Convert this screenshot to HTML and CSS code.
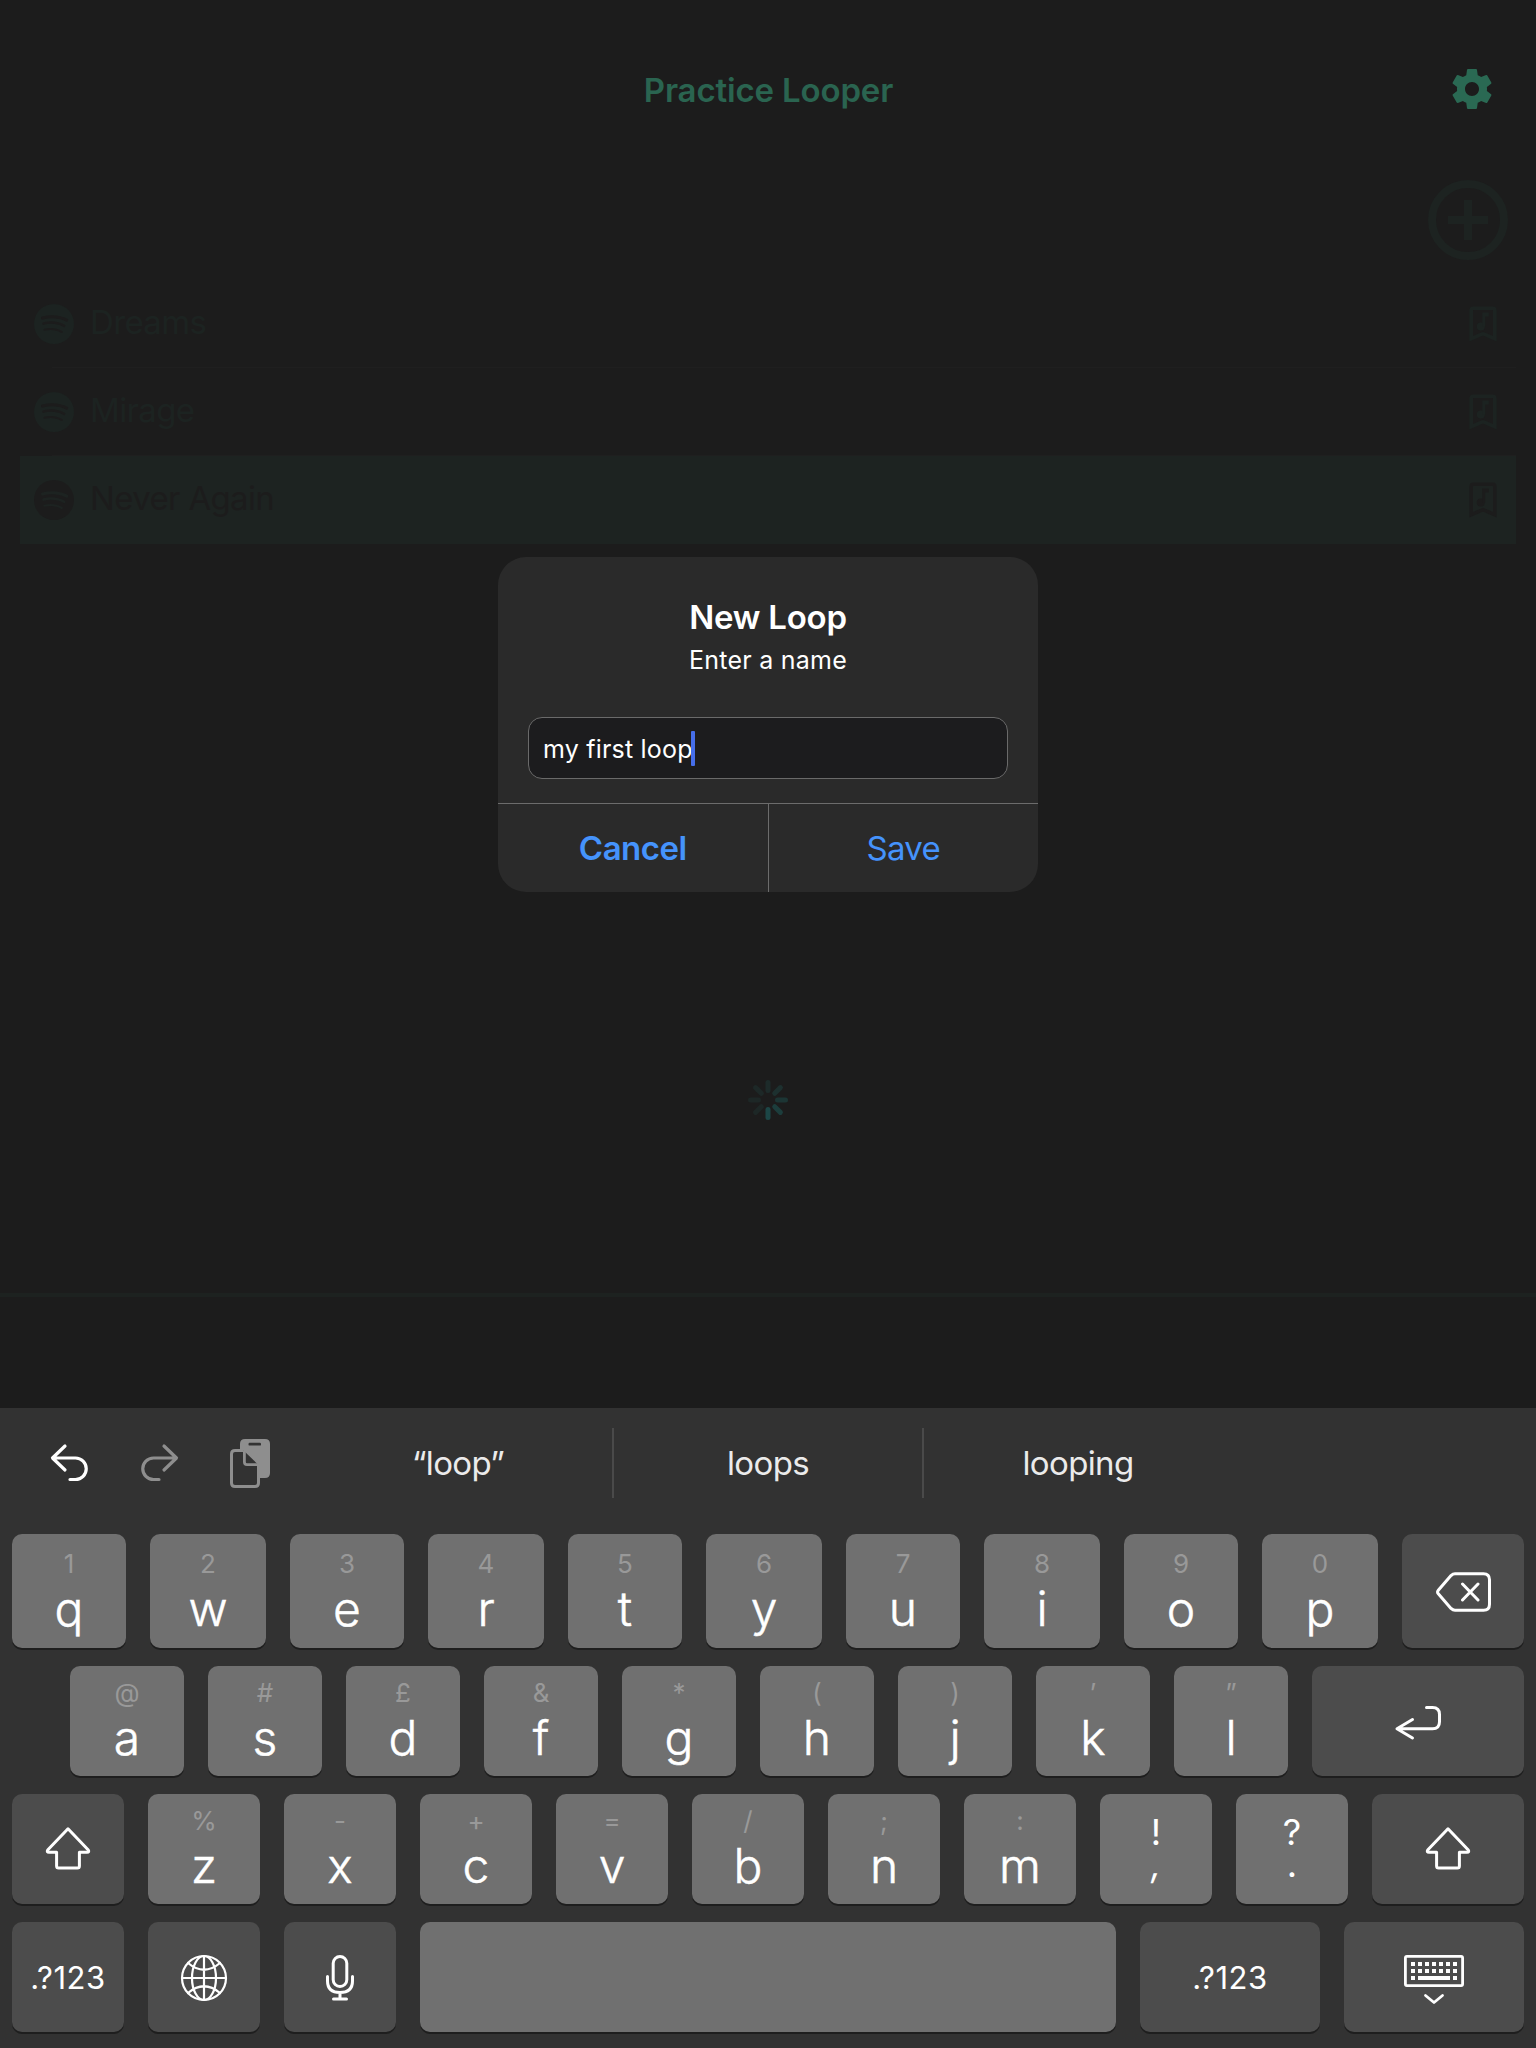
FILE: index.html
```html
<!DOCTYPE html>
<html lang="en">
<head>
<meta charset="utf-8">
<title>Practice Looper</title>
<link rel="stylesheet" href="styles.css">
</head>
<body>
<svg class="defs" width="0" height="0" aria-hidden="true">
  <symbol id="i-spotify" viewBox="0 0 40 40">
    <path fill="currentColor" fill-rule="evenodd" d="M20 0a20 20 0 1 0 0 40a20 20 0 0 0 0-40zM8 12.6c9-2.600 18.500-1.600 25.400 2.200a1.550 1.550 0 0 1-1.600 2.700c-6.300-3.300-15-4.200-22.900-2.100a1.450 1.450 0 0 1-.9-2.800zM9.200 18.300c7.600-2 15.400-1.200 21.600 2.500a1.250 1.250 0 0 1-1.300 2.200c-5.600-3.200-12.700-4-19.600-2.200a1.280 1.280 0 0 1-.7-2.500zM10.200 24.800c6.400-1.500 12.600-1 18 2.300a1 1 0 0 1-1 1.800c-4.900-2.900-10.700-3.400-16.500-2.100a1.020 1.020 0 0 1-.5-2z"/>
  </symbol>
  <symbol id="i-bookmark" viewBox="0 0 28 36">
    <path fill="none" stroke="currentColor" stroke-width="3.600" d="M2.200 32.700V4.200q0-2 2-2h19.600q2 0 2 2v28.500L14 27.700z"/>
    <circle cx="11.800" cy="20.500" r="4" fill="currentColor"/>
    <path fill="currentColor" d="M13.300 6.500h6.500v4h-3.600v10.200h-2.900z"/>
  </symbol>
  <symbol id="i-shift" viewBox="0 0 48 44">
    <path fill="none" stroke="currentColor" stroke-width="3" stroke-linejoin="round" d="M24 2.800L44.300 24q1.300 2.200-1.300 2.200h-7.600V40q0 2-2 2H14.600q-2 0-2-2V26.200H5q-2.600 0-1.300-2.200z"/>
  </symbol>
</svg>

<main class="app">
  <header class="navbar">
    <h1 class="navbar-title">Practice Looper</h1>
    <svg class="navbar-gear" viewBox="0 0 24 24"><path fill="currentColor" d="M19.430 12.980c.04-.32.07-.64.07-.98s-.03-.66-.07-.98l2.110-1.650c.19-.15.24-.42.12-.64l-2-3.460c-.12-.22-.39-.3-.61-.22l-2.490 1c-.52-.4-1.080-.73-1.690-.98l-.38-2.650C14.460 2.180 14.250 2 14 2h-4c-.25 0-.46.18-.49.42l-.38 2.650c-.61.25-1.170.59-1.690.98l-2.490-1c-.23-.09-.49 0-.61.22l-2 3.460c-.13.22-.07.49.12.64l2.110 1.650c-.04.32-.07.65-.07.98s.03.66.07.98l-2.110 1.650c-.19.15-.24.42-.12.64l2 3.460c.12.22.39.3.61.22l2.490-1c.52.4 1.080.73 1.690.98l.38 2.650c.03.24.24.42.49.42h4c.25 0 .46-.18.49-.42l.38-2.650c.61-.25 1.170-.59 1.690-.98l2.490 1c.23.09.49 0 .61-.22l2-3.460c.12-.22.07-.49-.12-.64l-2.110-1.650zM12 15.500c-1.930 0-3.500-1.570-3.500-3.500s1.570-3.500 3.500-3.500 3.500 1.570 3.500 3.500-1.570 3.500-3.500 3.500z"/></svg>
  </header>
  <div class="add-row">
    <svg class="add-icon" viewBox="0 0 80 80"><circle cx="40" cy="40" r="36"/><path d="M40 20v40M20 40h40"/></svg>
  </div>
  <ul class="songs">
    <li class="song">
      <svg class="song-source"><use href="#i-spotify"/></svg>
      <span class="song-name">Dreams</span>
      <svg class="song-mark"><use href="#i-bookmark"/></svg>
    </li>
    <li class="song">
      <svg class="song-source"><use href="#i-spotify"/></svg>
      <span class="song-name">Mirage</span>
      <svg class="song-mark"><use href="#i-bookmark"/></svg>
    </li>
    <li class="song song-selected">
      <svg class="song-source"><use href="#i-spotify"/></svg>
      <span class="song-name">Never Again</span>
      <svg class="song-mark"><use href="#i-bookmark"/></svg>
    </li>
  </ul>
  <div class="loading">
    <svg class="spinner" viewBox="-20 -20 40 40">
      <path d="M0-9.500V-17.500" stroke="#1d2b2a"/>
      <path d="M0-9.500V-17.500" stroke="#1d302f" transform="rotate(45)"/>
      <path d="M0-9.500V-17.500" stroke="#1c3534" transform="rotate(90)"/>
      <path d="M0-9.500V-17.500" stroke="#1c3d3c" transform="rotate(135)"/>
      <path d="M0-9.500V-17.500" stroke="#1c4646" transform="rotate(180)"/>
      <path d="M0-9.500V-17.500" stroke="#1d2726" transform="rotate(225)"/>
      <path d="M0-9.500V-17.500" stroke="#1d2726" transform="rotate(270)"/>
      <path d="M0-9.500V-17.500" stroke="#1d2827" transform="rotate(315)"/>
    </svg>
  </div>
  <div class="player-bar"></div>
</main>

<div class="overlay">
  <section class="dialog" role="dialog">
    <h2 class="dialog-title">New Loop</h2>
    <p class="dialog-message">Enter a name</p>
    <div class="dialog-input"><span class="dialog-value">my first loop</span><span class="caret"></span></div>
    <div class="dialog-actions">
      <span class="action action-cancel">Cancel</span>
      <span class="action action-save">Save</span>
    </div>
  </section>
</div>

<section class="keyboard">
  <div class="toolbar">
    <div class="tools">
      <svg class="tool tool-undo" viewBox="0 0 40 40"><path d="M17 7L4.500 19L17 31M5 19H27.500A10.750 10.750 0 0 1 27.500 40.500H22"/></svg>
      <svg class="tool tool-redo" viewBox="0 0 40 40"><path d="M23 7L35.500 19L23 31M35 19H12.500A10.750 10.750 0 0 0 12.500 40.500H18"/></svg>
      <svg class="tool-paste" viewBox="0 0 40 49">
        <path fill="#8e8e8e" d="M15 0h20q5 0 5 5v29q0 5-5 5H15q-5 0-5-5V5q0-5 5-5z"/>
        <rect x="18.500" y="3.800" width="12.500" height="2.800" rx="1.200" fill="#323232"/>
        <path fill="#323232" d="M5 11.500H13.500L29 26.500V44q0 3-3 3H5q-3.500 0-3.500-3V15q0-3.500 3.500-3.500z"/>
        <path fill="none" stroke="#8e8e8e" stroke-width="3" d="M13.500 11.500H5q-3.500 0-3.500 3.500v29q0 3.500 3.500 3.500h20q3.500 0 3.500-3.500V25.500"/>
        <path fill="none" stroke="#8e8e8e" stroke-width="2.800" d="M14.400 11.500V23q0 2.600 2.600 2.600H29"/>
      </svg>
    </div>
    <div class="suggestions">
      <span class="suggestion">“loop”</span>
      <span class="suggestion">loops</span>
      <span class="suggestion">looping</span>
    </div>
  </div>

  <div class="keys">
    <div class="row row-top">
      <div class="key"><span class="hint">1</span><span class="char">q</span></div>
      <div class="key"><span class="hint">2</span><span class="char">w</span></div>
      <div class="key"><span class="hint">3</span><span class="char">e</span></div>
      <div class="key"><span class="hint">4</span><span class="char">r</span></div>
      <div class="key"><span class="hint">5</span><span class="char">t</span></div>
      <div class="key"><span class="hint">6</span><span class="char">y</span></div>
      <div class="key"><span class="hint">7</span><span class="char">u</span></div>
      <div class="key"><span class="hint">8</span><span class="char">i</span></div>
      <div class="key"><span class="hint">9</span><span class="char">o</span></div>
      <div class="key"><span class="hint">0</span><span class="char">p</span></div>
      <div class="key key-dark"><svg class="glyph glyph-delete" viewBox="0 0 56 40"><path d="M19 1.700H47.500q6 0 6 6V32.300q0 6-6 6H19q-2 0-4-1.900L2.300 21.800q-1.500-1.800 0-3.600L15 3.600q2-1.900 4-1.900zM26.500 12L42 28M42 12L26.500 28"/></svg></div>
    </div>
    <div class="row row-home">
      <div class="key"><span class="hint">@</span><span class="char">a</span></div>
      <div class="key"><span class="hint">#</span><span class="char">s</span></div>
      <div class="key"><span class="hint">£</span><span class="char">d</span></div>
      <div class="key"><span class="hint">&amp;</span><span class="char">f</span></div>
      <div class="key"><span class="hint">*</span><span class="char">g</span></div>
      <div class="key"><span class="hint">(</span><span class="char">h</span></div>
      <div class="key"><span class="hint">)</span><span class="char">j</span></div>
      <div class="key"><span class="hint">’</span><span class="char">k</span></div>
      <div class="key"><span class="hint">”</span><span class="char">l</span></div>
      <div class="key key-dark"><svg class="glyph glyph-return" viewBox="0 0 48 36"><path d="M18.500 14.500L3 23.700L18.500 33M3 23.700H38.500q7 0 7-7V9.500q0-7-7-7H32.500"/></svg></div>
    </div>
    <div class="row row-bottom">
      <div class="key key-dark"><svg class="glyph-shift"><use href="#i-shift"/></svg></div>
      <div class="key"><span class="hint">%</span><span class="char">z</span></div>
      <div class="key"><span class="hint">-</span><span class="char">x</span></div>
      <div class="key"><span class="hint">+</span><span class="char">c</span></div>
      <div class="key"><span class="hint">=</span><span class="char">v</span></div>
      <div class="key"><span class="hint">/</span><span class="char">b</span></div>
      <div class="key"><span class="hint">;</span><span class="char">n</span></div>
      <div class="key"><span class="hint">:</span><span class="char">m</span></div>
      <div class="key key-pair"><span>!</span><span class="comma">,</span></div>
      <div class="key key-pair"><span>?</span><span>.</span></div>
      <div class="key key-dark"><svg class="glyph-shift"><use href="#i-shift"/></svg></div>
    </div>
    <div class="row row-space">
      <div class="key key-dark key-label">.?123</div>
      <div class="key key-dark"><svg class="glyph glyph-globe" viewBox="-24 -24 48 48"><circle r="22"/><ellipse rx="12" ry="22"/><path d="M0-22V22M-22 0H22M-16-15Q0-1.500 16-15M-16 15Q0 1.500 16 15"/></svg></div>
      <div class="key key-dark"><svg class="glyph glyph-mic" viewBox="0 0 30 46"><rect x="8.200" y="1.500" width="13.600" height="30" rx="6.800"/><path d="M2.500 21.500V26q0 11.500 12.500 11.500T27.500 26V21.500M15 37.500V43.500M8.500 44H21.500"/></svg></div>
      <div class="key"></div>
      <div class="key key-dark key-label">.?123</div>
      <div class="key key-dark">
        <svg class="glyph glyph-hide" viewBox="0 0 60 50">
          <rect x="1.400" y="1.400" width="57.200" height="29.200" rx="1.500"/>
          <path class="dots" d="M7 9H53M7 16H53" stroke-dasharray="4 3"/>
          <path class="dots" d="M7 23h4M14 23h32M49 23h4"/>
          <path d="M21.500 40.500L30 47.500L38.500 40.500"/>
        </svg>
      </div>
    </div>
  </div>
</section>
</body>
</html>
```
FILE: styles.css
```css
* { box-sizing: border-box; margin: 0; padding: 0; }

body {
  position: relative;
  width: 1536px;
  height: 2048px;
  overflow: hidden;
  background: #1c1c1c;
  color: #fff;
  font-family: Inter, "Liberation Sans", sans-serif;
}

svg { display: block; flex: none; }
.defs { position: absolute; }

/* App screen behind the dialog */
.app { display: flex; flex-direction: column; height: 1408px; }

.navbar {
  display: grid;
  grid-template-columns: 1fr auto 1fr;
  align-items: center;
  height: 98px;
  margin-top: 40px;
  padding-right: 40px;
}
.navbar-title {
  grid-column: 2;
  padding: 2px 0 0 41px;
  color: #2a6450;
  font-size: 33px;
  line-height: 40px;
  font-weight: 600;
  letter-spacing: -0.15px;
}
.navbar-gear { justify-self: end; width: 48px; height: 48px; color: #2a6953; }

.add-row { display: flex; justify-content: flex-end; height: 142px; padding: 42px 28px 0 0; }
.add-icon { width: 80px; height: 80px; fill: none; stroke: #1d2321; stroke-width: 8; }

.songs { list-style: none; padding: 0 20px; color: #1c2321; }
.song {
  display: flex;
  align-items: center;
  height: 88px;
  padding: 0 19px 0 14px;
  background: linear-gradient(#1f1f1f, #1f1f1f) 32px 87px / 100% 1px no-repeat;
}
.song-selected { background: #1d2321; color: #1c1c1c; }
.song-source { width: 40px; height: 40px; }
.song-name {
  flex: 1;
  margin-left: 16px;
  padding-bottom: 5px;
  font-size: 33px;
  line-height: 40px;
  letter-spacing: -0.65px;
}
.song-mark { width: 28px; height: 36px; }

.loading { display: flex; justify-content: center; padding-top: 536px; }
.spinner { width: 40px; height: 40px; fill: none; stroke-width: 5; stroke-linecap: round; }
.player-bar { height: 4px; margin-top: 173px; background: #1d2220; }

/* Dialog */
.overlay {
  position: absolute;
  top: 0;
  left: 0;
  display: flex;
  align-items: center;
  justify-content: center;
  width: 100%;
  height: 1449px;
}
.dialog {
  display: flex;
  flex-direction: column;
  width: 540px;
  height: 335px;
  padding-top: 40px;
  overflow: hidden;
  border-radius: 28px;
  background: #2a2a2a;
  text-align: center;
}
.dialog-title { font-size: 33px; line-height: 40px; font-weight: 600; letter-spacing: -0.25px; }
.dialog-message { margin-top: 5px; font-size: 25px; line-height: 36px; letter-spacing: 0.25px; }
.dialog-input {
  display: flex;
  align-items: center;
  height: 62px;
  margin: 39px 30px 0;
  padding-left: 14px;
  border: 1px solid #6a6a6a;
  border-radius: 14px;
  background: #1c1c1e;
}
.dialog-value { padding-top: 2px; font-size: 25px; line-height: 36px; letter-spacing: 0.2px; }
.caret { width: 4px; height: 35px; margin-left: -2px; border-radius: 1px; background: #466eea; }
.dialog-actions { display: flex; height: 89px; margin-top: 24px; border-top: 1px solid #6c6c6c; }
.action {
  flex: 1;
  color: #4593fc;
  font-size: 33px;
  line-height: 88px;
}
.action-cancel { border-right: 1px solid #6c6c6c; font-weight: 600; letter-spacing: -0.5px; }
.action-save { letter-spacing: -0.7px; }

/* Keyboard */
.keyboard { height: 640px; background: #323232; }
.toolbar { display: flex; height: 126px; }
.tools { display: flex; width: 302px; padding-left: 48px; }
.tool {
  width: 40px;
  height: 40px;
  overflow: visible;
  fill: none;
  stroke-width: 3.200;
  stroke-linecap: round;
  stroke-linejoin: round;
}
.tool-undo { margin-top: 31px; stroke: #fff; }
.tool-redo { margin: 31px 0 0 53px; stroke: #8e8e8e; }
.tool-paste { width: 40px; height: 49px; margin: 31px 0 0 49px; }
.suggestions { display: flex; height: 70px; margin-top: 20px; }
.suggestion {
  width: 310px;
  color: #ebebeb;
  font-size: 33px;
  line-height: 70px;
  letter-spacing: -0.65px;
  text-align: center;
}
.suggestion:first-child { padding-left: 2px; }
.suggestion + .suggestion { border-left: 2px solid #4a4a4a; }

.keys { display: flex; flex-direction: column; gap: 18px; padding: 0 12px; }
.row { display: grid; gap: 24px; height: 110px; }
.row-top { grid-template-columns: 114px 116px 114px 116px 114px 116px 114px 116px 114px 116px 122px; height: 114px; }
.row-home { grid-template-columns: repeat(9, 114px) 212px; padding-left: 58px; }
.row-bottom { grid-template-columns: repeat(10, 112px) 152px; }
.row-space { grid-template-columns: repeat(3, 112px) 696px 180px 180px; }

.key {
  display: flex;
  flex-direction: column;
  align-items: center;
  border-radius: 10px;
  background: #707070;
  box-shadow: 0 2px 0 #1e1e1e;
}
.key-dark { justify-content: center; background: #4c4c4c; }
.row-top .key { padding-top: 3px; }
.row-top .key-dark { padding-top: 0; }
.hint { color: #999; font-size: 26px; line-height: 54px; font-weight: 400; }
.char { font-size: 48px; line-height: 35px; font-weight: 300; -webkit-text-stroke: 0.5px #fff; }
.key-pair { gap: 1.500px; padding-top: 23px; font-size: 36px; line-height: 30px; font-weight: 400; }
.key-pair .comma { transform: skewX(-8deg); }
.key-label { padding-top: 2px; font-size: 31px; line-height: 36px; letter-spacing: 0.6px; }

.glyph { fill: none; stroke: #fff; stroke-width: 3; stroke-linecap: round; stroke-linejoin: round; }
.glyph-delete { width: 56px; height: 40px; margin: 2px 0 0 2px; }
.glyph-return { width: 48px; height: 36px; margin-top: 3px; }
.glyph-shift { width: 48px; height: 44px; margin-top: -2px; }
.glyph-globe { width: 48px; height: 48px; margin-top: 1px; stroke-width: 2.200; }
.glyph-mic { width: 30px; height: 46px; margin-top: 1px; }
.glyph-hide { width: 60px; height: 50px; margin-top: 5px; stroke-width: 2.800; }
.glyph-hide .dots { stroke-width: 4; stroke-linecap: butt; }
```
